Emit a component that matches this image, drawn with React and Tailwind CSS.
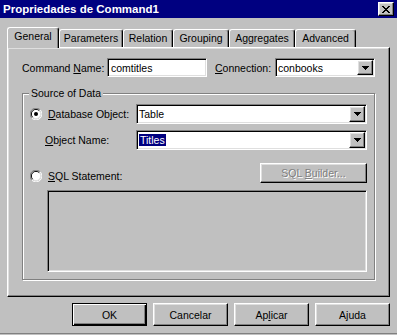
const raised = 'border border-t-white border-l-white border-r-black border-b-black shadow-[inset_-1px_-1px_0_#808080,inset_1px_1px_0_#dfdfdf]'
const sunken = 'border border-t-[#808080] border-l-[#808080] border-r-white border-b-white shadow-[inset_1px_1px_0_#000,inset_-1px_-1px_0_#dfdfdf]'

function Arrow() {
  return (
    <svg width="7" height="4" viewBox="0 0 7 4" shapeRendering="crispEdges">
      <path d="M0 0h7v1h-1v1h-1v1h-1v1h-1v-1h-1v-1h-1v-1h-1z" fill="#000" />
    </svg>
  )
}

function CloseGlyph() {
  const rows = ['11000011', '01100110', '00111100', '00011000', '00111100', '01100110', '11000011']
  return (
    <svg width="8" height="7" viewBox="0 0 8 7" shapeRendering="crispEdges">
      {rows.map((r, y) =>
        r.split('').map((c, x) => (c === '1' ? <rect key={`${x}-${y}`} x={x} y={y} width="1" height="1" fill="#000" /> : null))
      )}
    </svg>
  )
}

function Radio({ checked }) {
  return (
    <svg width="12" height="12" viewBox="0 0 12 12">
      <circle cx="6" cy="6" r="5" fill="#fff" />
      <path d="M10.2 1.8 A5.5 5.5 0 0 0 1.8 10.2" stroke="#808080" fill="none" />
      <path d="M1.8 10.2 A5.5 5.5 0 0 0 10.2 1.8" stroke="#fff" fill="none" />
      <path d="M9.3 2.7 A4.3 4.3 0 0 0 2.7 9.3" stroke="#000" fill="none" />
      <path d="M2.7 9.3 A4.3 4.3 0 0 0 9.3 2.7" stroke="#dfdfdf" fill="none" />
      {checked && <circle cx="6" cy="6" r="2" fill="#000" />}
    </svg>
  )
}

function Combo({ className, children }) {
  return (
    <div className={`flex bg-white p-px ${sunken} ${className}`}>
      <div className="flex-1 flex items-center pl-[1px] overflow-hidden whitespace-nowrap">{children}</div>
      <div className={`w-[16px] flex items-center justify-center bg-[#c0c0c0] ${raised}`}>
        <Arrow />
      </div>
    </div>
  )
}

function Tab({ label, active, className }) {
  if (active) {
    return (
      <div className={`relative z-10 h-[21px] -mb-px flex justify-center pt-[2px] bg-[#c0c0c0] border-t border-l border-r border-t-white border-l-white border-r-black rounded-t-[3px] shadow-[inset_-1px_0_0_#808080] ${className}`}>
        {label}
      </div>
    )
  }
  return (
    <div className={`h-[18px] flex justify-center pt-[2px] border-t border-l border-r border-t-white border-l-white border-r-black rounded-t-[3px] shadow-[inset_-1px_0_0_#808080] ${className}`}>
      {label}
    </div>
  )
}

function Button({ children, isDefault }) {
  if (isDefault) {
    return (
      <div className="w-[75px] h-[23px] flex items-center justify-center border border-black shadow-[inset_1px_1px_0_#fff,inset_-1px_-1px_0_#000,inset_-2px_-2px_0_#808080]">
        <span>{children}</span>
      </div>
    )
  }
  return (
    <div className={`w-[75px] h-[23px] flex items-center justify-center ${raised}`}>
      <span>{children}</span>
    </div>
  )
}

export default function App() {
  return (
    <div className="w-[397px] h-[335px] bg-[#c0c0c0] flex flex-col text-black text-[10.5px] leading-[12px] font-['Liberation_Sans',Arial,sans-serif]">
      {/* Title bar */}
      <div className="h-[18px] shrink-0 bg-[#000080] flex items-center justify-between pl-[3px] pr-[3px]">
        <span className="text-white font-bold text-[11.5px]">Propriedades de Command1</span>
        <div className={`w-[16px] h-[14px] flex items-center justify-center bg-[#c0c0c0] ${raised}`}>
          <CloseGlyph />
        </div>
      </div>

      {/* Tabs */}
      <div className="pt-[9px] pl-[7px] h-[29px] shrink-0 flex items-end">
        <Tab label="General" active className="w-[52px]" />
        <Tab label="Parameters" className="w-[64px]" />
        <Tab label="Relation" className="w-[50px]" />
        <Tab label="Grouping" className="w-[56px]" />
        <Tab label="Aggregates" className="w-[66px]" />
        <Tab label="Advanced" className="w-[61px]" />
      </div>

      {/* Panel */}
      <div className="ml-[7px] w-[383px] h-[250px] shrink-0 border border-t-white border-l-white border-r-black border-b-black shadow-[inset_-1px_-1px_0_#808080,inset_1px_1px_0_#dfdfdf]">
        <div className="mt-[10px] flex items-center h-[19px]">
          <span className="w-[99px] pl-[14px]">
            Command <u>N</u>ame:
          </span>
          <div className={`w-[100px] h-[19px] bg-white flex items-center pl-[3px] ${sunken}`}>comtitles</div>
          <span className="w-[68px] pl-[8px]">
            <u>C</u>onnection:
          </span>
          <Combo className="w-[100px] h-[19px]">conbooks</Combo>
        </div>

        {/* Group box */}
        <div className="relative mt-[16px] ml-[14px] w-[353px] h-[187px] border border-[#808080] shadow-[inset_1px_1px_0_#fff,1px_1px_0_#fff]">
          <span className="absolute -top-[7px] left-[6px] px-[2px] bg-[#c0c0c0]">Source of Data</span>

          <div className="mt-[10px] h-[20px] flex items-center">
            <div className="w-[25px] pl-[7px] flex">
              <Radio checked />
            </div>
            <span className="w-[88px]">
              <u>D</u>atabase Object:
            </span>
            <Combo className="w-[231px] h-[20px]">Table</Combo>
          </div>

          <div className="mt-[6px] h-[20px] flex items-center">
            <span className="w-[113px] pl-[22px]">
              <u>O</u>bject Name:
            </span>
            <Combo className="w-[231px] h-[20px]">
              <span className="bg-[#000080] text-white px-[1px]">Titles</span>
            </Combo>
          </div>

          <div className="mt-[13px] h-[20px] flex">
            <div className="w-[237px] pt-[6px] flex items-center">
              <div className="w-[25px] pl-[7px] flex">
                <Radio />
              </div>
              <span>
                <u>S</u>QL Statement:
              </span>
            </div>
            <div className={`w-[107px] h-[20px] flex items-center justify-center text-[#808080] [text-shadow:1px_1px_0_#fff] ${raised}`}>
              <span>
                SQL <u>B</u>uilder...
              </span>
            </div>
          </div>

          <div className={`mt-[7px] ml-[24px] w-[320px] h-[82px] bg-[#c0c0c0] ${sunken}`} />
        </div>
      </div>

      {/* Buttons */}
      <div className="mt-[6px] pl-[72px] flex gap-[6px] shrink-0">
        <Button isDefault>OK</Button>
        <Button>Cancelar</Button>
        <Button>
          Ap<u>l</u>icar
        </Button>
        <Button>Ajuda</Button>
      </div>

      <div className="mt-[7px] h-px bg-[#808080] shrink-0" />
    </div>
  )
}
